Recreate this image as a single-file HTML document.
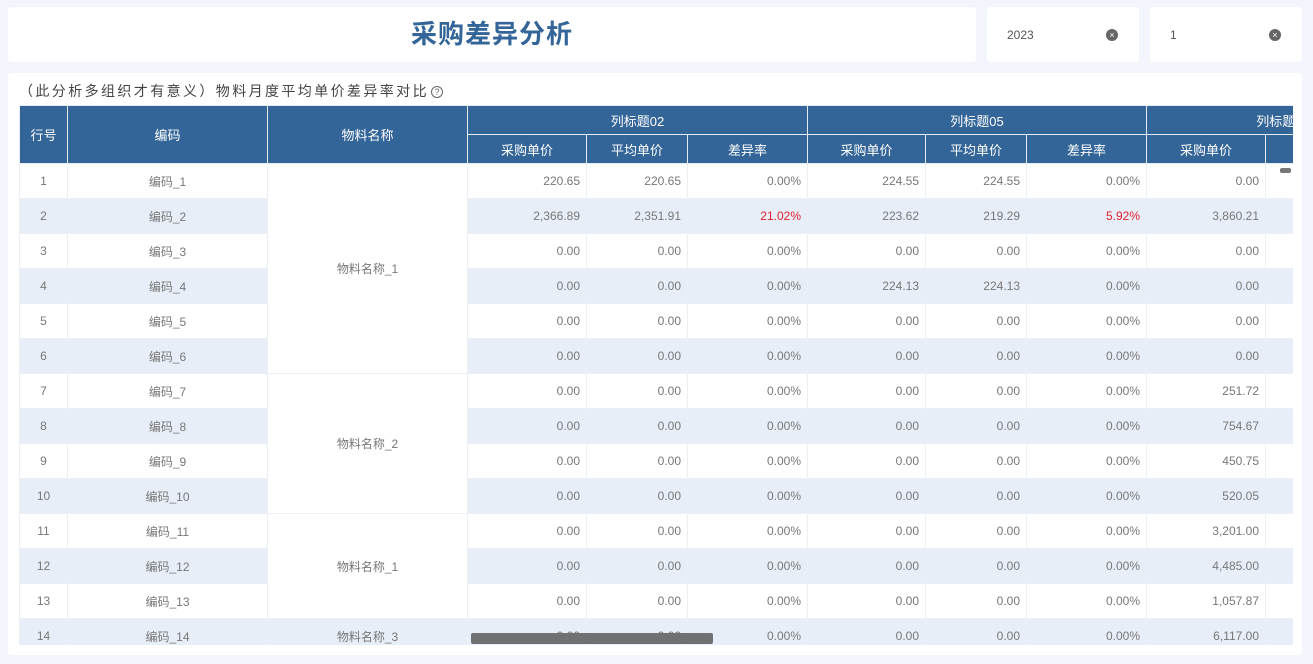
<!DOCTYPE html>
<html><head><meta charset="utf-8"><style>
*{margin:0;padding:0;box-sizing:border-box}
body{width:1313px;height:664px;background:#f2f5fb;font-family:"Liberation Sans","Noto Sans CJK SC",sans-serif;position:relative;overflow:hidden}
.p{position:absolute;background:#fff;border-radius:3px}
.title{left:8px;top:7px;width:968px;height:55px;text-align:center;line-height:55px;font-size:26px;font-weight:bold;color:#336598;letter-spacing:1px}
.f{top:7px;width:152px;height:55px;font-size:12px;color:#555;line-height:56px;padding-left:20px}
.x{position:absolute;right:21px;top:22px;width:12px;height:12px;border-radius:50%;background:#666;color:#fff;font-size:9px;line-height:12px;text-align:center}
.main{left:8px;top:73px;width:1294px;height:582px}
.cap{position:absolute;left:19px;top:81px;font-size:14px;color:#444;letter-spacing:2.4px}
.q{display:inline-block;width:12px;height:12px;border:1px solid #666;border-radius:50%;font-size:9px;line-height:10px;text-align:center;vertical-align:1px;margin-left:2px;color:#666;letter-spacing:0}
.wrap{position:absolute;left:19px;top:105px;width:1274px;height:540px;overflow:hidden}
table{border-collapse:collapse;table-layout:fixed;width:1400px;font-size:12px}
th{background:#336598;color:#fff;font-weight:normal;font-size:13px;border:1px solid #e6ecf4;height:29px}
td{height:35px;border:1px solid #eceff4;color:#777;text-align:right;padding-right:6px}
td.c{text-align:center;padding:0}
tr.e td{background:#e8eef8}
tr td.w{background:#fff}
.r{color:#e0202e!important}
.sb{position:absolute;left:471px;top:633px;width:242px;height:11px;background:#6f7173;border-radius:2px}
.sv{position:absolute;left:1280px;top:168px;width:11px;height:5px;background:#777;border-radius:2px}
</style></head><body>
<div class="p title">采购差异分析</div>
<div class="p f" style="left:987px">2023<span class="x">×</span></div>
<div class="p f" style="left:1150px">1<span class="x">×</span></div>
<div class="p main"></div>
<div class="cap">（此分析多组织才有意义）物料月度平均单价差异率对比<span class="q">?</span></div>
<div class="wrap"><table>
<colgroup><col style="width:48px"><col style="width:200px"><col style="width:200px"><col style="width:119px"><col style="width:101px"><col style="width:120px"><col style="width:118px"><col style="width:101px"><col style="width:120px"><col style="width:119px"><col style="width:154px"></colgroup>
<tr><th rowspan="2">行号</th><th rowspan="2">编码</th><th rowspan="2">物料名称</th><th colspan="3">列标题02</th><th colspan="3">列标题05</th><th colspan="2">列标题06</th></tr>
<tr><th>采购单价</th><th>平均单价</th><th>差异率</th><th>采购单价</th><th>平均单价</th><th>差异率</th><th>采购单价</th><th>平均单价</th></tr>
<tr><td class="c">1</td><td class="c">编码_1</td><td class="c w" rowspan="6">物料名称_1</td><td>220.65</td><td>220.65</td><td>0.00%</td><td>224.55</td><td>224.55</td><td>0.00%</td><td>0.00</td><td></td></tr>
<tr class="e"><td class="c">2</td><td class="c">编码_2</td><td>2,366.89</td><td>2,351.91</td><td class="r">21.02%</td><td>223.62</td><td>219.29</td><td class="r">5.92%</td><td>3,860.21</td><td></td></tr>
<tr><td class="c">3</td><td class="c">编码_3</td><td>0.00</td><td>0.00</td><td>0.00%</td><td>0.00</td><td>0.00</td><td>0.00%</td><td>0.00</td><td></td></tr>
<tr class="e"><td class="c">4</td><td class="c">编码_4</td><td>0.00</td><td>0.00</td><td>0.00%</td><td>224.13</td><td>224.13</td><td>0.00%</td><td>0.00</td><td></td></tr>
<tr><td class="c">5</td><td class="c">编码_5</td><td>0.00</td><td>0.00</td><td>0.00%</td><td>0.00</td><td>0.00</td><td>0.00%</td><td>0.00</td><td></td></tr>
<tr class="e"><td class="c">6</td><td class="c">编码_6</td><td>0.00</td><td>0.00</td><td>0.00%</td><td>0.00</td><td>0.00</td><td>0.00%</td><td>0.00</td><td></td></tr>
<tr><td class="c">7</td><td class="c">编码_7</td><td class="c w" rowspan="4">物料名称_2</td><td>0.00</td><td>0.00</td><td>0.00%</td><td>0.00</td><td>0.00</td><td>0.00%</td><td>251.72</td><td></td></tr>
<tr class="e"><td class="c">8</td><td class="c">编码_8</td><td>0.00</td><td>0.00</td><td>0.00%</td><td>0.00</td><td>0.00</td><td>0.00%</td><td>754.67</td><td></td></tr>
<tr><td class="c">9</td><td class="c">编码_9</td><td>0.00</td><td>0.00</td><td>0.00%</td><td>0.00</td><td>0.00</td><td>0.00%</td><td>450.75</td><td></td></tr>
<tr class="e"><td class="c">10</td><td class="c">编码_10</td><td>0.00</td><td>0.00</td><td>0.00%</td><td>0.00</td><td>0.00</td><td>0.00%</td><td>520.05</td><td></td></tr>
<tr><td class="c">11</td><td class="c">编码_11</td><td class="c w" rowspan="3">物料名称_1</td><td>0.00</td><td>0.00</td><td>0.00%</td><td>0.00</td><td>0.00</td><td>0.00%</td><td>3,201.00</td><td></td></tr>
<tr class="e"><td class="c">12</td><td class="c">编码_12</td><td>0.00</td><td>0.00</td><td>0.00%</td><td>0.00</td><td>0.00</td><td>0.00%</td><td>4,485.00</td><td></td></tr>
<tr><td class="c">13</td><td class="c">编码_13</td><td>0.00</td><td>0.00</td><td>0.00%</td><td>0.00</td><td>0.00</td><td>0.00%</td><td>1,057.87</td><td></td></tr>
<tr class="e"><td class="c">14</td><td class="c">编码_14</td><td class="c">物料名称_3</td><td>0.00</td><td>0.00</td><td>0.00%</td><td>0.00</td><td>0.00</td><td>0.00%</td><td>6,117.00</td><td></td></tr>
</table></div>
<div class="sb"></div>
<div class="sv"></div>
</body></html>
